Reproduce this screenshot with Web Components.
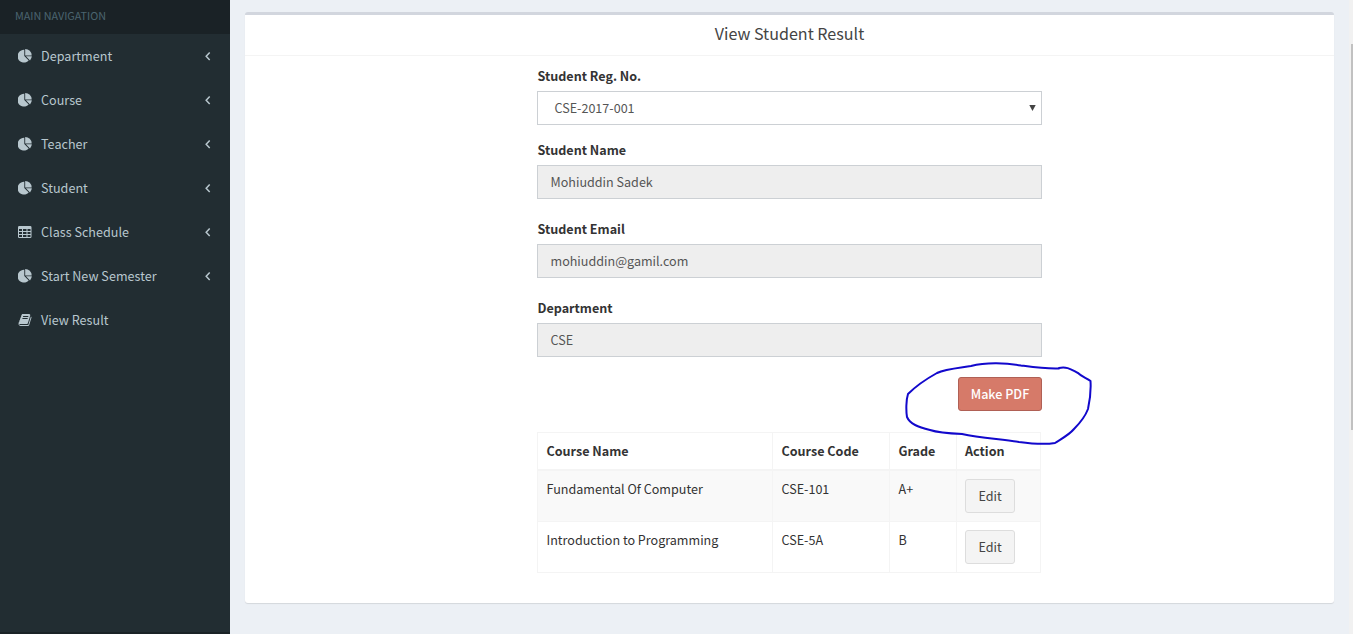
<!DOCTYPE html>
<html lang="en">
<head>
<meta charset="utf-8">
<title>View Student Result</title>
<style>
html,body{margin:0;height:100%;overflow:hidden}
body{font-family:"Noto Sans CJK SC","Noto Sans",sans-serif;font-size:12.57px;line-height:20px;color:#333;background:#ecf0f5}
</style>
</head>
<body>
<app-shell>
  <side-nav slot="nav" heading="MAIN NAVIGATION">
    <nav-item icon="pie" arrow>Department</nav-item>
    <nav-item icon="pie" arrow>Course</nav-item>
    <nav-item icon="pie" arrow>Teacher</nav-item>
    <nav-item icon="pie" arrow>Student</nav-item>
    <nav-item icon="table" arrow>Class Schedule</nav-item>
    <nav-item icon="pie" arrow>Start New Semester</nav-item>
    <nav-item icon="book">View Result</nav-item>
  </side-nav>
  <content-box>
    <span slot="title">View Student Result</span>
    <form-field label="Student Reg. No." kind="select">CSE-2017-001</form-field>
    <form-field label="Student Name">Mohiuddin Sadek</form-field>
    <form-field label="Student Email">mohiuddin@gamil.com</form-field>
    <form-field label="Department">CSE</form-field>
    <action-row><ui-button kind="danger">Make PDF</ui-button><pen-loop></pen-loop></action-row>
    <result-table></result-table>
  </content-box>
</app-shell>
<script>
function define(name, html, setup) {
  const t = document.createElement('template');
  t.innerHTML = html;
  customElements.define(name, class extends HTMLElement {
    constructor() {
      super();
      this.attachShadow({mode: 'open'}).append(t.content.cloneNode(true));
    }
    connectedCallback() { if (setup) setup(this, this.shadowRoot); }
  });
}

define('app-shell', `
<style>
:host{display:flex;height:100vh;background:#ecf0f5}
main{flex:1;padding:12px 15px 0}
.track{width:4px;box-sizing:border-box;padding:44px 0 0 2px;background:#f1f1f1}
.thumb{height:386px;background:#c1c1c1}
</style>
<slot name="nav"></slot><main><slot></slot></main>
<div class="track"><div class="thumb"></div></div>`);

define('side-nav', `
<style>
:host{display:flex;flex-direction:column;width:230px;background:#222d32}
header{height:34px;box-sizing:border-box;padding:5px 15px;background:#1a2226;color:#4b646f;font-size:10.8px;line-height:20px}
.end{margin-top:auto;height:2px;background:#1a2226}
</style>
<header></header><slot></slot><div class="end"></div>`,
(el, r) => { r.querySelector('header').textContent = el.getAttribute('heading'); });

const icons = {
  pie: '<svg width="14" height="14" viewBox="0 0 14 14"><path d="M6.300.8v6.300l4.400 4.400A6.400 6.400 0 1 1 6.300.8z"/><path d="M7.200 0a6.500 6.500 0 0 1 6.500 6.400H7.200z"/><path d="M7.900 7.300h5.900a6.300 6.300 0 0 1-1.800 4.100z"/></svg>',
  table: '<svg width="14" height="14" viewBox="0 0 14 14"><path fill-rule="evenodd" d="M1.300 1h10.900q1.300 0 1.300 1.200v9.600q0 1.200-1.300 1.200H1.300Q0 13 0 11.800V2.200Q0 1 1.300 1zM1 4v2h3V4zm4 0v2h3.500V4zm4.500 0v2h3V4zM1 7v2h3V7zm4 0v2h3.500V7zm4.500 0v2h3V7zM1 10v2h3v-2zm4 0v2h3.500v-2zm4.500 0v2h3v-2z"/></svg>',
  book: '<svg width="14" height="14" viewBox="0 0 1792 1792"><path d="M1703 478q40 57 18 129l-275 906q-19 64-76.500 107.500t-122.500 43.500h-923q-77 0-148.500-53.500t-99.500-131.500q-24-67-2-127 0-4 3-27t4-37q1-8-3-21.500t-3-19.500q2-11 8-21t16.500-23.500 16.500-23.500q23-38 45-91.500t30-91.500q3-10 .5-30t-.5-28q3-11 17-28t17-23q21-36 42-92t25-90q1-9-2.500-32t.5-28q4-13 22-30.500t22-22.500q19-26 42.500-84.500t27.500-96.500q1-8-3-25.500t-2-26.500q2-8 9-18t18-23 17-21q8-12 16.500-30.500t15-35 16-36 19.500-32 26.500-23.500 36-11.500 47.500 5.500l-1 3q38-9 51-9h761q74 0 114 56t18 130l-274 906q-36 119-71.500 153.500t-128.500 34.500h-869q-27 0-38 15-11 16-1 43 24 70 144 70h923q29 0 56-15.500t35-41.500l300-987q7-22 5-57 38 15 59 43zm-1064 2q-4 13 2 22.500t20 9.500h608q13 0 25.500-9.500t16.500-22.500l21-64q4-13-2-22.500t-20-9.500h-608q-13 0-25.500 9.500t-16.500 22.500zm-83 256q-4 13 2 22.500t20 9.500h608q13 0 25.500-9.500t16.500-22.500l21-64q4-13-2-22.500t-20-9.500h-608q-13 0-25.500 9.500t-16.500 22.500z"/></svg>'
};

define('nav-item', `
<style>
:host{display:flex;align-items:center;height:44px;box-sizing:border-box;padding:0 18px;color:#b8c7ce;letter-spacing:.03px}
.icon{display:flex;width:23px}
.icon svg{fill:currentColor}
.text{flex:1}
.arrow{display:none;margin-right:1px}
:host([arrow]) .arrow{display:block}
</style>
<span class="icon"></span><span class="text"><slot></slot></span>
<svg class="arrow" width="6" height="10" viewBox="0 0 6 10" fill="none" stroke="currentColor" stroke-width="1.5"><path d="M4.700 1.500L1.200 5.200l3.500 3.700"/></svg>`,
(el, r) => { r.querySelector('.icon').innerHTML = icons[el.getAttribute('icon')]; });

define('content-box', `
<style>
:host{display:block;height:591px;box-sizing:border-box;background:#fff;border-top:3px solid #d2d6de;border-radius:3px;box-shadow:0 1px 1px rgba(0,0,0,.1)}
header{height:41px;box-sizing:border-box;border-bottom:1px solid #f4f4f4;text-align:center;font-size:16.1px;line-height:36px;color:#444}
.body{width:505px;margin:0 auto;padding-top:10px}
</style>
<header><slot name="title"></slot></header><div class="body"><slot></slot></div>`);

define('form-field', `
<style>
:host{display:block;margin-bottom:20px}
:host([kind=select]){margin-bottom:15px}
label{display:block;margin-bottom:5px;padding-left:.5px;font-weight:700}
.control{display:flex;align-items:center;justify-content:space-between;height:34px;box-sizing:border-box;border:1px solid #ccd0d4;background:#eee;padding:0 12.5px;color:#555}
:host([kind=select]) .control{background:#fff;padding:0 5.500px 0 16.500px}
svg{display:none}
:host([kind=select]) svg{display:block}
</style>
<label></label><div class="control"><span><slot></slot></span><svg width="7" height="6" viewBox="0 0 7 6"><path d="M.3 0h6.400L3.500 6z" fill="#444"/></svg></div>`,
(el, r) => { r.querySelector('label').textContent = el.getAttribute('label'); });

define('ui-button', `
<style>
:host{display:block}
button{display:block;height:34px;width:50px;padding:0;border:1px solid #ddd;border-radius:3px;background:#f4f4f4;color:#444;font:inherit;line-height:32px}
:host([kind=danger]) button{width:84px;background:#d67a69;border-color:#b06055;color:#fff;font-weight:500}
</style><button><slot></slot></button>`);

define('action-row', `
<style>:host{display:flex;justify-content:flex-end;position:relative;margin-bottom:21px}</style><slot></slot>`);

define('pen-loop', `
<style>:host{position:absolute;left:363px;top:-20px;width:200px;height:94px;pointer-events:none}svg{display:block}</style>
<svg width="200" height="94" viewBox="900 357 200 94" fill="none" stroke="#1208cc" stroke-width="2" stroke-linejoin="round" stroke-linecap="round"><path d="M1059 368.500C1045 369 1032 367 1021 365.500C1005 362.500 985 362.500 971 366C958 368 945 369 937 373C928 378 917 385 908 394C906 400 906 411 907 417C910 424 918 427 930 430C939 433 950 433.500 962 434C980 438 1000 439 1019 442C1034 444 1046 444.500 1055 443C1061 439 1069 435 1074 429C1081 422 1085 417 1088 409C1090 400 1091 389 1090.500 381C1087 378 1082 377 1078 373C1072 370 1067 366 1059 368"/></svg>`);

define('result-table', `
<style>
:host{display:block}
table{width:504px;border-collapse:collapse;table-layout:fixed;border:1px solid #f4f4f4}
th,td{box-sizing:border-box;border:1px solid #f4f4f4;padding:8px 8px 8px 8.500px;text-align:left;vertical-align:top}
th:last-child,td:last-child{padding-left:8px}
th{height:37px;padding-bottom:7px;border-bottom-width:2px}
td{height:51px}
tbody tr:first-child{background:#f9f9f9}
</style>
<table><colgroup><col style="width:235px"><col style="width:117px"><col style="width:67px"><col></colgroup>
<thead><tr><th>Course Name</th><th>Course Code</th><th>Grade</th><th>Action</th></tr></thead>
<tbody>
<tr><td>Fundamental Of Computer</td><td>CSE-101</td><td>A+</td><td><ui-button>Edit</ui-button></td></tr>
<tr><td>Introduction to Programming</td><td>CSE-5A</td><td>B</td><td><ui-button>Edit</ui-button></td></tr>
</tbody></table>`);
</script>
</body>
</html>
